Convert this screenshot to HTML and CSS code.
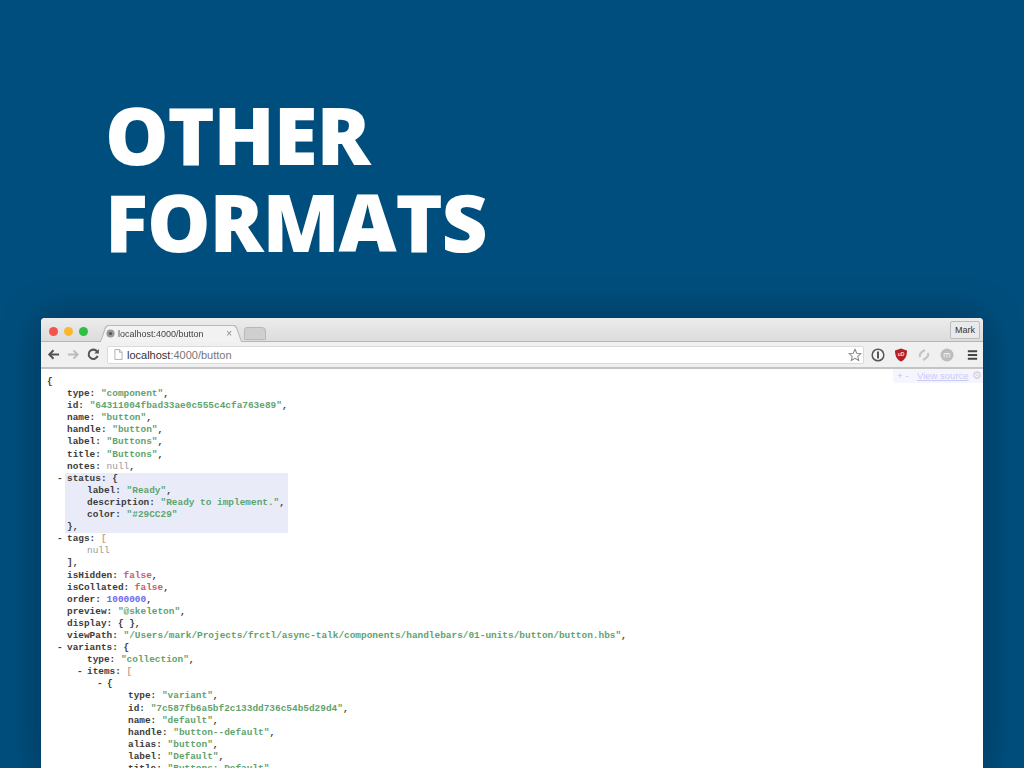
FILE: index.html
```html
<!DOCTYPE html>
<html lang="en">
<head>
<meta charset="utf-8">
<title>Other formats</title>
<link rel="stylesheet" href="styles.css">
</head>
<body>
<main class="slide">
  <h1 class="title">OTHER<br>FORMATS</h1>
  <section class="browser">
    <div class="tabstrip">
      <div class="lights"><i class="light red"></i><i class="light yellow"></i><i class="light green"></i></div>
      <div class="tab">
        <svg class="favicon" viewBox="0 0 10 10"><circle cx="5" cy="5" r="4.5" fill="#999"/><circle cx="5" cy="5" r="1.8" fill="#555"/></svg>
        <span class="tab-title">localhost:4000/button</span>
        <span class="tab-close">×</span>
      </div>
      <div class="newtab"></div>
      <div class="user">Mark</div>
    </div>
    <div class="toolbar">
      <svg class="nav" viewBox="0 0 14 14"><path d="M13 7H3M7 2.500 2.500 7 7 11.500" fill="none" stroke="#555" stroke-width="2.200"/></svg>
      <svg class="nav" viewBox="0 0 14 14"><path d="M1 7h10M7 2.500 11.500 7 7 11.500" fill="none" stroke="#bbb" stroke-width="2"/></svg>
      <svg class="nav" viewBox="0 0 14 14"><path d="M11.500 8.500A5 5 0 1 1 11 4" fill="none" stroke="#555" stroke-width="2.200"/><path d="M12.800 1v5h-5z" fill="#555"/></svg>
      <div class="omnibox">
        <svg class="page" viewBox="0 0 10 12"><path d="M1 .5h5l3 3v8H1zM6 .5v3h3" fill="#fff" stroke="#aaa"/></svg>
        <span class="url"><b>localhost</b>:4000/button</span>
        <svg class="star" viewBox="0 0 16 16"><path d="m8 1.500 2 4.400 4.800.5-3.600 3.200 1 4.700L8 11.900l-4.200 2.400 1-4.700L1.200 6.400 6 5.900z" fill="#fff" stroke="#888" stroke-width="1.200"/></svg>
      </div>
      <div class="extensions">
        <svg class="ext" viewBox="0 0 14 14"><circle cx="7" cy="7" r="5.800" fill="#f4f4f4" stroke="#555" stroke-width="1.500"/><path d="M7 3.500v7" stroke="#555" stroke-width="2"/></svg>
        <svg class="ext" viewBox="0 0 14 14"><path d="M7 .5 13 2.500c0 5-1.500 9-6 11-4.500-2-6-6-6-11z" fill="#b3202a"/><text x="7" y="8" class="ub">uD</text></svg>
        <svg class="ext" viewBox="0 0 14 14"><path d="M3 9c-1-3 1-5 5-7M11 5c1 3-1 5-5 7" fill="none" stroke="#c4c4c4" stroke-width="2.200"/></svg>
        <svg class="ext" viewBox="0 0 14 14"><circle cx="7" cy="7" r="6.500" fill="#bdbdbd"/><path d="M4.200 9.500V5.500M7 9.500V5.500M9.800 9.500V5.500M4.200 5.500h5.600" fill="none" stroke="#eee"/></svg>
        <svg class="ext menu" viewBox="0 0 14 14"><path d="M2 3h10M2 7h10M2 11h10" stroke="#444" stroke-width="2"/></svg>
      </div>
    </div>
    <div class="viewport">
      <div class="sourcebar"><span class="pm">+ -</span> <span class="viewsource">View source</span> <span class="gear">⚙</span></div>
      <div class="json">
        <div class="ln">{</div>
        <div class="ln i1"><b>type:</b> <s>"component"</s>,</div>
        <div class="ln i1"><b>id:</b> <s>"64311004fbad33ae0c555c4cfa763e89"</s>,</div>
        <div class="ln i1"><b>name:</b> <s>"button"</s>,</div>
        <div class="ln i1"><b>handle:</b> <s>"button"</s>,</div>
        <div class="ln i1"><b>label:</b> <s>"Buttons"</s>,</div>
        <div class="ln i1"><b>title:</b> <s>"Buttons"</s>,</div>
        <div class="ln i1"><b>notes:</b> <u>null</u>,</div>
        <div class="hilite">
          <div class="ln i1"><em>-</em><b>status:</b> {</div>
          <div class="ln i2"><b>label:</b> <s>"Ready"</s>,</div>
          <div class="ln i2"><b>description:</b> <s>"Ready to implement."</s>,</div>
          <div class="ln i2"><b>color:</b> <s>"#29CC29"</s></div>
          <div class="ln i1">},</div>
        </div>
        <div class="ln i1"><em>-</em><b>tags:</b> <i class="tan">[</i></div>
        <div class="ln i2"><u>null</u></div>
        <div class="ln i1">],</div>
        <div class="ln i1"><b>isHidden:</b> <q>false</q>,</div>
        <div class="ln i1"><b>isCollated:</b> <q>false</q>,</div>
        <div class="ln i1"><b>order:</b> <var>1000000</var>,</div>
        <div class="ln i1"><b>preview:</b> <s>"@skeleton"</s>,</div>
        <div class="ln i1"><b>display:</b> { },</div>
        <div class="ln i1"><b>viewPath:</b> <s>"/Users/mark/Projects/frctl/async-talk/components/handlebars/01-units/button/button.hbs"</s>,</div>
        <div class="ln i1"><em>-</em><b>variants:</b> {</div>
        <div class="ln i2"><b>type:</b> <s>"collection"</s>,</div>
        <div class="ln i2"><em>-</em><b>items:</b> <i class="tan">[</i></div>
        <div class="ln i3"><em>-</em>{</div>
        <div class="ln i4"><b>type:</b> <s>"variant"</s>,</div>
        <div class="ln i4"><b>id:</b> <s>"7c587fb6a5bf2c133dd736c54b5d29d4"</s>,</div>
        <div class="ln i4"><b>name:</b> <s>"default"</s>,</div>
        <div class="ln i4"><b>handle:</b> <s>"button--default"</s>,</div>
        <div class="ln i4"><b>alias:</b> <s>"button"</s>,</div>
        <div class="ln i4"><b>label:</b> <s>"Default"</s>,</div>
        <div class="ln i4"><b>title:</b> <s>"Buttons: Default"</s>,</div>
      </div>
    </div>
  </section>
</main>
</body>
</html>
```
FILE: styles.css
```css
* { box-sizing: border-box; }
html, body { margin: 0; height: 100%; }
body { overflow: hidden; background: #004e7d; }
.slide { width: 1024px; height: 768px; overflow: hidden; display: flex; flex-direction: column; padding: 90px 41px 0; }
.title { flex: none; margin: 0 0 0 64px; height: 228px; font: 800 80px/87px "Open Sans", sans-serif; letter-spacing: -1.2px; color: #fff; }
.browser { flex: 1; width: 942px; display: flex; flex-direction: column; border-radius: 4px 4px 0 0; box-shadow: 0 0 40px rgba(0, 0, 0, .3); filter: blur(.6px); background: #fff; font-family: "Liberation Sans", sans-serif; }
.tabstrip { height: 24px; display: flex; align-items: flex-end; position: relative; background: linear-gradient(#ececec, #dcdcdc); border-radius: 4px 4px 0 0; border-bottom: 1px solid #b5b5b5; }
.lights { display: flex; gap: 6px; align-self: flex-start; padding: 9px 0 0 8px; }
.light { width: 9px; height: 9px; border-radius: 50%; }
.red { background: #f5544d; } .yellow { background: #fab82d; } .green { background: #2fc042; }
.tab { position: relative; isolation: isolate; width: 142px; height: 17px; margin: 0 -1px -1px 12px; display: flex; align-items: center; padding-left: 6px; font-size: 9px; color: #444; }
.tab::before, .tab::after { content: ""; position: absolute; inset: 0; z-index: -1; clip-path: polygon(0 100%, 5px 2px, 7px 0, calc(100% - 7px) 0, calc(100% - 5px) 2px, 100% 100%); }
.tab::before { background: #bbb; }
.tab::after { inset: 1px 1px 0; background: #f2f2f2; }
.favicon { width: 9px; height: 9px; margin-right: 3px; }
.tab-title { flex: 1; }
.tab-close { color: #888; margin-right: 10px; font-size: 10px; }
.newtab { width: 22px; height: 13px; margin: 0 0 1px 3px; background: #cfcfcf; border: 1px solid #b8b8b8; border-radius: 3px 4px 1px 1px; }
.user { margin: 0 3px 2px auto; align-self: flex-end; width: 30px; height: 18px; font-size: 9px; line-height: 16px; text-align: center; color: #333; background: #e9e9e9; border: 1px solid #bdbdbd; border-radius: 2px; }
.toolbar { height: 27px; display: flex; align-items: center; padding-left: 6px; background: #f0f0f0; border-bottom: 2px solid #c4c4c4; }
.nav { width: 13px; height: 13px; margin-right: 7px; flex: none; }
.omnibox { width: 757px; height: 18px; display: flex; align-items: center; padding: 0 1px 0 6px; background: #fff; border: 1px solid #dadada; border-radius: 2px; }
.page { width: 9px; height: 11px; margin-right: 4px; }
.url { flex: 1; font-size: 11px; color: #777; }
.url b { font-weight: 400; color: #333; }
.star { width: 14px; height: 14px; }
.extensions { display: flex; align-items: center; gap: 9px; padding-left: 7px; }
.ext { width: 14px; height: 14px; }
.ub { font: 700 5px "Liberation Sans", sans-serif; fill: #f6dada; text-anchor: middle; }
.menu { width: 13px; margin-left: 3px; }
.viewport { position: relative; flex: 1; overflow: hidden; background: #fff; }
.sourcebar { position: absolute; top: 0; right: 0; width: 90px; height: 14px; padding-left: 4px; background: #f5f5fe; border-radius: 0 0 0 4px; font-size: 9.500px; line-height: 13px; color: #c4c4dc; white-space: nowrap; }
.viewsource { color: #c9c9f7; text-decoration: underline; margin-left: 6px; }
.gear { color: #cdd0e2; margin-left: 1px; font-size: 11px; }
.json { padding-top: 7px; font: 700 9.430px/12.100px "Liberation Mono", monospace; color: #3c3c3c; }
.ln { position: relative; padding-left: 6px; white-space: pre; }
.ln.i1 { padding-left: 26px; }
.ln.i2 { padding-left: 46px; }
.ln.i3 { padding-left: 66px; }
.ln.i4 { padding-left: 87px; }
.ln s { text-decoration: none; color: #5fa46e; }
.ln u { text-decoration: none; font-weight: 400; color: #999; }
.ln q { quotes: none; color: #c8606a; }
.ln var { font-style: normal; color: #6868f0; }
.ln em { position: absolute; margin-left: -10px; font-style: normal; }
.ln .tan { font-style: normal; color: #c9a58e; }
.hilite { width: 223px; margin-left: 24px; background: #e9ecf8; }
.hilite .ln { margin-left: -24px; }
```
